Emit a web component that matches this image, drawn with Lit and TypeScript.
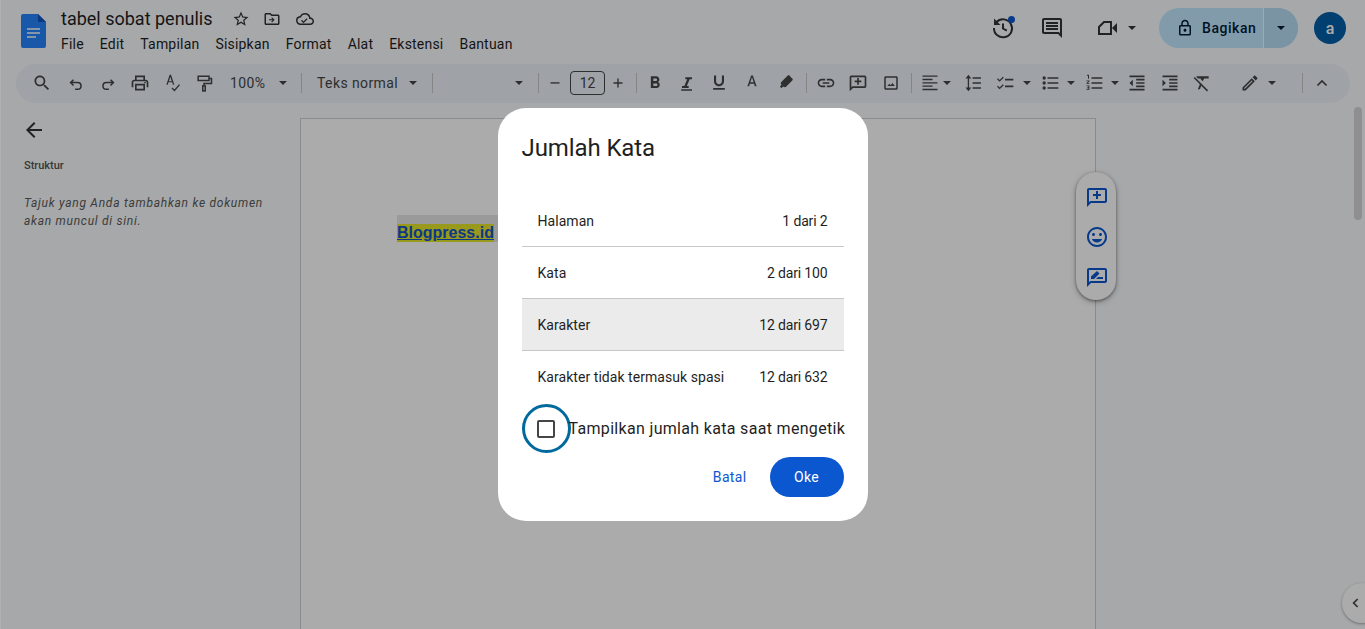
import { LitElement, html, css, svg } from "lit";
import { customElement } from "lit/decorators.js";

const stroke = (c: unknown, w = 2) => svg`<g fill="none" stroke="currentColor" stroke-width="${w}">${c}</g>`;
const icons: Record<string, unknown> = {
  search: svg`<path d="M15.5 14h-.79l-.28-.27C15.41 12.59 16 11.11 16 9.5 16 5.91 13.09 3 9.5 3S3 5.91 3 9.5 5.91 16 9.5 16c1.61 0 3.09-.59 4.23-1.57l.27.28v.79l5 4.99L20.49 19l-4.99-5zm-6 0C7.01 14 5 11.99 5 9.5S7.01 5 9.5 5 14 7.01 14 9.5 11.99 14 9.5 14z"/>`,
  undo: stroke(svg`<path d="M9 15 5.5 11.5 9 8M5.5 11.5H14a4 4 0 0 1 0 8h-3"/>`, 1.8),
  redo: stroke(svg`<path d="M15 8l3.5 3.5L15 15M18.5 11.5H10a4 4 0 0 0 0 8h3"/>`, 1.8),
  print: svg`<path d="M19 8h-1V3H6v5H5c-1.66 0-3 1.34-3 3v6h4v4h12v-4h4v-6c0-1.66-1.34-3-3-3zM8 5h8v3H8V5zm8 14H8v-4h8v4zm2-2v-4H6v4H4v-6c0-.55.45-1 1-1h14c.55 0 1 .45 1 1v6h-2z"/><circle cx="18" cy="11.5" r="1"/>`,
  spell: svg`<path d="M5.2 14h1.6l1-2.8h4.4l1 2.8h1.6L10.8 2H9.2L5.2 14zm3.1-4.2L10 4.9l1.7 4.9H8.3z"/>${stroke(svg`<path d="M12 18l3 3 6-7"/>`, 1.6)}`,
  paint: stroke(svg`<path d="M5 4h13v5H5zM18 6.5h3v6h-9v3"/><rect x="10.5" y="15.5" width="3" height="6"/>`, 1.8),
  bold: svg`<path d="M15.6 10.79c.97-.67 1.65-1.77 1.65-2.79 0-2.26-1.75-4-4-4H7v14h7.04c2.09 0 3.71-1.7 3.71-3.79 0-1.52-.86-2.82-2.15-3.42zM10 6.5h3c.83 0 1.5.67 1.5 1.5s-.67 1.5-1.5 1.5h-3v-3zm3.5 9H10v-3h3.5c.83 0 1.5.67 1.5 1.5s-.67 1.5-1.5 1.5z"/>`,
  italic: svg`<path d="M9 4v2.5h2.21l-3.42 8H5V17h8v-2.5h-2.21l3.42-8H17V4z" transform="translate(1 1)"/><rect x="5" y="19.5" width="13" height="1.8"/>`,
  underline: svg`<path d="M12 16c3.31 0 6-2.69 6-6V3h-2.5v7c0 1.93-1.57 3.5-3.5 3.5S8.5 11.93 8.5 10V3H6v7c0 3.31 2.69 6 6 6zM5 18v2h14v-2H5z"/>`,
  textcolor: svg`<path d="M11 3 6.5 16h2l1-3h5l1 3h2L13 3h-2zm-1 8 2-6 2 6h-4z"/>`,
  marker: svg`<path d="M18.5 3.5 21 6c.5.5.5 1.2 0 1.7l-8 8-1.5.5-1-1-3 1.8-1.5-1.5 1.8-3-1-1 .5-1.5 8-8c.5-.5 1.7-.5 2.2 0z" transform="translate(0 1)"/>`,
  link: svg`<path d="M3.9 12c0-1.71 1.39-3.1 3.1-3.1h4V7H7c-2.76 0-5 2.24-5 5s2.24 5 5 5h4v-1.9H7c-1.71 0-3.1-1.39-3.1-3.1zM8 13h8v-2H8v2zm9-6h-4v1.9h4c1.71 0 3.1 1.39 3.1 3.1s-1.39 3.1-3.1 3.1h-4V17h4c2.76 0 5-2.24 5-5s-2.24-5-5-5z"/>`,
  addc: svg`<path d="M20 3H4c-1.1 0-2 .9-2 2v17l4-4h14c1.1 0 2-.9 2-2V5c0-1.1-.9-2-2-2zm0 13H5.2L4 17.2V5h16v11zM11 14h2v-3h3V9h-3V6h-2v3H8v2h3z"/>`,
  image: svg`<path d="M19 5v14H5V5h14m0-2H5c-1.1 0-2 .9-2 2v14c0 1.1.9 2 2 2h14c1.1 0 2-.9 2-2V5c0-1.1-.9-2-2-2zM7 16h10l-3-4-2.5 3-1.5-2z"/>`,
  align: svg`<path d="M3 4h18v1.6H3zM3 8h12v1.6H3zM3 12h18v1.6H3zM3 16h12v1.6H3zM3 20h18v1.6H3z" transform="translate(0 -1)"/>`,
  spacing: svg`${stroke(svg`<path d="M6.5 5v14"/>`, 1.6)}<path d="M6.5 2 10 6.500H3zM6.500 22 3 17.500h7zM11.500 5h10v2h-10zM11.500 11h10v2h-10zM11.500 17h10v2h-10z"/>`,
  check: svg`${stroke(svg`<path d="M3 7l2.5 2.5L10 5M3 16l2.5 2.5L10 14"/>`, 1.6)}<path d="M12 7h10v2H12zM12 15h10v2H12z"/>`,
  bullet: svg`<circle cx="5" cy="6" r="2"/><circle cx="5" cy="12" r="2"/><circle cx="5" cy="18" r="2"/><path d="M9 5h13v2H9zM9 11h13v2H9zM9 17h13v2H9z"/>`,
  number: svg`<path d="M9 5h13v2H9zM9 11h13v2H9zM9 17h13v2H9zM3.5 2H6v5H4.8V3.2H3.5zM3 9h3.5v1.2L4.5 12h2v1H3v-1l2-1.800V10H3zM3 15h3.500v5H3v-1h2.300v-1H4v-1h1.300v-1H3z"/>`,
  outdent: svg`<path d="M3 3h18v2H3zM11 7h10v2H11zM11 11h10v2H11zM11 15h10v2H11zM3 19h18v2H3zM7 8v8l-4-4z"/>`,
  indent: svg`<path d="M3 3h18v2H3zM11 7h10v2H11zM11 11h10v2H11zM11 15h10v2H11zM3 19h18v2H3zM3 8v8l4-4z"/>`,
  clear: svg`<path d="M5 4h15v2.500h-5.500L13 10l-2-2-.800-1.500H7zM3.300 4.700 2 6l7.400 7.400L7 19.500h2.500l1.600-4.300 6.900 6.900 1.300-1.300z"/>`,
  pencil: svg`<path d="M3 17.250V21h3.750L17.810 9.940l-3.750-3.750L3 17.250zM5.920 19H5v-.92l9.060-9.060.92.92L5.920 19zM20.710 7.040a.996.996 0 0 0 0-1.410l-2.340-2.340a.996.996 0 0 0-1.410 0l-1.830 1.830 3.750 3.750 1.830-1.830z"/>`,
  chevup: stroke(svg`<path d="M6.500 15 12 9.500 17.500 15"/>`, 2),
  minus: svg`<rect x="6" y="11" width="12" height="1.800"/>`,
  plus: svg`<path d="M11.100 6h1.800v5.100H18v1.800h-5.100V18h-1.800v-5.100H6v-1.800h5.100z"/>`,
  star: svg`<path d="M22 9.240l-7.190-.62L12 2 9.190 8.630 2 9.240l5.460 4.730L5.820 21 12 17.270 18.180 21l-1.630-7.030L22 9.240zM12 15.400l-3.760 2.270 1-4.280-3.320-2.880 4.380-.38L12 6.100l1.710 4.040 4.380.38-3.320 2.880 1 4.280L12 15.400z"/>`,
  move: svg`<path d="M20 6h-8l-2-2H4c-1.100 0-2 .9-2 2v12c0 1.100.9 2 2 2h16c1.100 0 2-.9 2-2V8c0-1.100-.9-2-2-2zm0 12H4V6h5.200l2 2H20v10zM12 9.500 11 10.500l1.800 1.800H8v1.500h4.800L11 15.500l1 1 3.500-3.500z"/>`,
  cloud: svg`<path d="M19.350 10.040A7.490 7.490 0 0 0 12 4C9.110 4 6.600 5.640 5.350 8.040A5.994 5.994 0 0 0 0 14c0 3.310 2.690 6 6 6h13c2.760 0 5-2.240 5-5 0-2.640-2.050-4.780-4.650-4.960zM19 18H6c-2.210 0-4-1.790-4-4s1.790-4 4-4h.71C7.370 7.690 9.480 6 12 6a5.500 5.500 0 0 1 5.500 5.500v.5H19c1.660 0 3 1.340 3 3s-1.340 3-3 3zM10 15.200l-2.100-2.100-1.200 1.200L10 17.600l5.300-5.300-1.200-1.200z"/>`,
  history: svg`${stroke(svg`<path d="M5.400 6.200A9 9 0 1 1 3 12"/><path d="M12 7.500V12.500l3.800 2.200"/>`, 2)}<path d="M3 2.500v6.500h6.500z"/>`,
  comment: svg`<path d="M20 17.170 18.830 16H4V4h16v13.170zM20 2H4c-1.100 0-2 .9-2 2v12c0 1.100.9 2 2 2h14l4 4V4c0-1.100-.9-2-2-2zM6 12h12v2H6zM6 9h12v2H6zM6 6h12v2H6z"/>`,
  video: svg`${stroke(svg`<path d="M8 6h7v12H3v-7z"/>`, 2)}<path d="M16 12l5-5v10z"/>`,
  lock: svg`<path d="M18 8h-1V6c0-2.760-2.240-5-5-5S7 3.240 7 6v2H6c-1.100 0-2 .9-2 2v10c0 1.100.9 2 2 2h12c1.100 0 2-.9 2-2V10c0-1.100-.9-2-2-2zM9 6c0-1.660 1.340-3 3-3s3 1.340 3 3v2H9V6zm9 14H6V10h12v10zm-6-3c1.100 0 2-.9 2-2s-.9-2-2-2-2 .9-2 2 .9 2 2 2z"/>`,
  back: svg`<path d="M20 11H7.830l5.590-5.590L12 4l-8 8 8 8 1.410-1.410L7.830 13H20z"/>`,
  emoji: svg`<path d="M11.990 2C6.470 2 2 6.480 2 12s4.470 10 9.990 10C17.520 22 22 17.520 22 12S17.520 2 11.990 2zM12 20c-4.420 0-8-3.580-8-8s3.580-8 8-8 8 3.580 8 8-3.580 8-8 8zm3.500-9c.83 0 1.500-.67 1.500-1.500S16.330 8 15.500 8 14 8.670 14 9.500s.67 1.500 1.500 1.500zm-7 0c.83 0 1.500-.67 1.500-1.500S9.330 8 8.500 8 7 8.670 7 9.500 7.670 11 8.500 11zm3.500 6.500c2.330 0 4.310-1.460 5.110-3.500H6.890c.8 2.040 2.780 3.500 5.110 3.500z"/>`,
  suggest: svg`<path d="M20 3H4c-1.100 0-2 .9-2 2v17l4-4h14c1.100 0 2-.9 2-2V5c0-1.100-.9-2-2-2zm0 13H5.200L4 17.200V5h16v11zM6 14v-2.500L12 6l2.500 2.500L9 14zM11 14h7v-2h-5z"/>`,
  chevleft: stroke(svg`<path d="M14.500 6 8.500 12l6 6"/>`, 2.6),
};
const ic = (n: string, s = 20) => html`<svg class="ic" width=${s} height=${s} viewBox="0 0 24 24" fill="currentColor">${icons[n]}</svg>`;
const caret = html`<svg class="caret" width="8" height="4" viewBox="0 0 8 4"><path d="M0 0h8L4 4z" fill="currentColor"/></svg>`;

type T = { k: string; w: number; n?: string; t?: string; s?: number; pad?: number; ml?: number };
const toolbar: T[] = [
  { k: "b", w: 32, n: "search" }, { k: "g", w: 2 },
  { k: "b", w: 32, n: "undo" }, { k: "b", w: 32, n: "redo" }, { k: "b", w: 32, n: "print" }, { k: "b", w: 32, n: "spell" }, { k: "b", w: 32, n: "paint" },
  { k: "t", w: 72, t: "100%", pad: 10 }, { k: "s", w: 18 },
  { k: "t", w: 112, t: "Teks normal", pad: 7 }, { k: "s", w: 20 },
  { k: "t", w: 86, t: "", pad: 0 }, { k: "s", w: 20 },
  { k: "b", w: 14, n: "minus", s: 18 }, { k: "g", w: 8 }, { k: "box", w: 35, t: "12" },
  { k: "b", w: 26, n: "plus", s: 18 }, { k: "s", w: 10 },
  { k: "b", w: 28, n: "bold" }, { k: "g", w: 2 }, { k: "b", w: 32, n: "italic" }, { k: "b", w: 32, n: "underline" },
  { k: "b", w: 34, n: "textcolor" }, { k: "b", w: 32, n: "marker" }, { k: "s", w: 11 },
  { k: "b", w: 28, n: "link" }, { k: "g", w: 2 }, { k: "b", w: 32, n: "addc" }, { k: "g", w: 1 }, { k: "b", w: 32, n: "image", s: 18 }, { k: "s", w: 8 },
  { k: "c", w: 42, n: "align", pad: 5, ml: 3 }, { k: "b", w: 32, n: "spacing" },
  { k: "c", w: 45, n: "check", pad: 6, ml: 8 }, { k: "c", w: 44, n: "bullet", pad: 6, ml: 7 }, { k: "c", w: 44, n: "number", pad: 6, ml: 7 },
  { k: "b", w: 30, n: "outdent" }, { k: "b", w: 36, n: "indent" }, { k: "b", w: 28, n: "clear" }, { k: "g", w: 24 },
  { k: "c", w: 36, n: "pencil", pad: 0, ml: 8 }, { k: "g", w: 16 }, { k: "s", w: 20 }, { k: "b", w: 20, n: "chevup" },
];

@customElement("app-root")
export class AppRoot extends LitElement {
  static styles = css`
    :host { display: block; position: relative; height: 100vh; min-height: 629px; overflow: hidden; background: #f9fbfd; color: #1f1f1f; font-family: Roboto, "Liberation Sans", sans-serif; }
    * { box-sizing: border-box; }
    .ic { display: block; flex: none; }
    .caret { display: block; flex: none; }
    header { display: flex; height: 64px; align-items: flex-start; }
    .logo { margin: 14px 0 0 21px; flex: none; }
    .names { margin-left: 15px; padding-top: 7px; }
    .titleline { display: flex; align-items: center; height: 23px; }
    .title { font-size: 18px; letter-spacing: 0; line-height: 23px; width: 171px; white-space: nowrap; }
    .star { color: #333; }
    .folder { margin-left: 13px; color: #333; }
    .cloud { margin-left: 15px; color: #333; }
    nav { display: flex; margin-top: 4px; font-size: 14px; letter-spacing: .2px; line-height: 20px; gap: 16px; color: #1f1f1f; }
    .right { margin-left: auto; display: flex; align-items: center; height: 56px; color: #333; padding-right: 19px; }
    .comment-i { margin-left: 25px; }
    .hist { position: relative; }
    .dot { position: absolute; top: 0; right: 0; width: 7px; height: 7px; border-radius: 50%; background: #0b57d0; }
    .video { margin-left: 32px; }
    .vc { margin-left: 8px; }
    .share { margin-left: 23px; display: flex; width: 139px; height: 40px; border-radius: 20px; overflow: hidden; background: #c2e7ff; color: #001d35; }
    .sl { width: 105px; display: flex; align-items: center; padding-left: 17px; gap: 8px; font-size: 14px; font-weight: 500; letter-spacing: .55px; border-right: 1px solid #f9fbfd; }
    .sr { flex: 1; display: flex; align-items: center; justify-content: center; background: #b8ddf5; }
    .avatar { margin-left: 16px; width: 32px; height: 32px; border-radius: 50%; background: #005fa8; color: #fff; font-size: 16px; font-weight: 500; display: flex; align-items: center; justify-content: center; }
    .tb { margin: 0 15px 0 16px; height: 39px; border-radius: 20px; background: #edf2fa; display: flex; align-items: center; padding: 0 0 1px 10px; color: #444746; }
    .tb > * { flex: none; height: 28px; display: flex; align-items: center; justify-content: center; }
    .tt { justify-content: space-between !important; font-size: 14px; letter-spacing: .4px; padding-right: 5px; }
    .sep::before { content: ""; width: 1px; height: 20px; background: #c7c7c7; }
    .box { border: 1px solid #444746; border-radius: 4px; height: 24px !important; font-size: 14px; }
    .combo { justify-content: flex-start !important; }
    main { display: flex; height: 526px; }
    aside { flex: none; width: 300px; padding-left: 24px; }
    .backi { display: block; margin: 15px 0 0 -2px; color: #333; }
    .st { margin-top: 17px; font-size: 11px; font-weight: 500; line-height: 14px; color: #555; }
    .hint { margin: 21px 0 0; font-size: 12px; font-style: italic; line-height: 18px; letter-spacing: .73px; color: #5a5a5a; width: 250px; }
    .page { flex: none; width: 796px; margin-top: 15px; background: #fff; border: 1px solid #d0d0d0; border-bottom: none; padding: 96px 0 0 96px; }
    .sel { background: #e6e6e6; padding-top: 9px; width: 101px; height: 27px; }
    .doc { display: block; width: 97px; background: #e4e42a; height: 18px; font: bold 16px/18px "Liberation Sans", sans-serif; color: #1155cc; text-decoration: underline; white-space: nowrap; }
    .side { position: absolute; left: 1076px; top: 172px; width: 40px; height: 128px; border-radius: 20px; background: #fff; box-shadow: 0 1px 3px rgba(0,0,0,.4), 0 2px 6px rgba(0,0,0,.25); display: flex; flex-direction: column; align-items: center; justify-content: center; gap: 16px; padding: 2px 0 0 1px; color: #0b57d0; }
    .thumb { position: absolute; left: 1354px; top: 107px; width: 8px; height: 113px; border-radius: 4px; background: #d5d6d8; }
    .edge { position: absolute; left: 1342px; top: 583px; width: 40px; height: 40px; border-radius: 50%; background: #fff; box-shadow: 0 1px 3px rgba(0,0,0,.35); display: flex; align-items: center; padding-left: 6px; color: #444746; }
    .overlay { position: absolute; inset: 0; background: rgba(0,0,0,.33); display: flex; align-items: center; justify-content: center; }
    .strip { position: absolute; left: 0; top: 0; bottom: 0; width: 1px; background: rgba(255,255,255,.12); }
    .dialog { width: 370px; height: 413px; border-radius: 28px; background: #fff; padding: 24px; display: flex; flex-direction: column; }
    h2 { margin: 0; font: 400 24px/32px Roboto, sans-serif; letter-spacing: -.1px; color: #1f1f1f; height: 62px; }
    .rows { display: flex; flex-direction: column; margin-top: 1px; }
    .row { height: 52px; display: flex; align-items: center; justify-content: space-between; padding: 0 16px; font-size: 14px; letter-spacing: .05px; border-bottom: 1px solid #c7c7c7; color: #1f1f1f; }
    .row span + span { letter-spacing: -.15px; }
    .row:last-child { border-bottom: none; }
    .row.on { background: #ebebeb; }
    .cb { display: flex; align-items: center; height: 49px; margin-top: 1px; }
    .ring { flex: none; width: 49px; height: 49px; border-radius: 50%; border: 3px solid #006a9e; display: flex; align-items: center; justify-content: center; padding-top: 1px; }
    .square { width: 18px; height: 18px; border: 2px solid #444746; border-radius: 2px; }
    .cb span { margin-left: -2px; font-size: 16px; letter-spacing: .32px; white-space: nowrap; color: #1f1f1f; }
    .acts { display: flex; justify-content: flex-end; align-items: center; margin-top: 4px; gap: 23px; font-size: 14px; letter-spacing: .35px; }
    .batal { color: #0b57d0; }
    .oke { width: 74px; height: 40px; border-radius: 20px; background: #0b57d0; color: #fff; display: flex; align-items: center; justify-content: center; }
  `;

  private item(t: T) {
    const w = `width:${t.w}px`;
    if (t.k === "b") return html`<div style=${w}>${ic(t.n!, t.s ?? 20)}</div>`;
    if (t.k === "g") return html`<div style=${w}></div>`;
    if (t.k === "s") return html`<div class="sep" style=${w}></div>`;
    if (t.k === "box") return html`<div class="box" style=${w}>${t.t}</div>`;
    if (t.k === "t") return html`<div class="tt" style="${w};padding-left:${t.pad}px"><span>${t.t}</span>${caret}</div>`;
    return html`<div class="combo" style="${w};padding-left:${t.pad}px">${ic(t.n!)}<span style="margin-left:${t.ml}px;display:flex">${caret}</span></div>`;
  }

  render() {
    return html`
      <header>
        <svg class="logo" width="25" height="34" viewBox="0 0 25 34">
          <path d="M2 0h15l8 8v24a2 2 0 0 1-2 2H2a2 2 0 0 1-2-2V2a2 2 0 0 1 2-2z" fill="#2684fc"/>
          <path d="M17 0l8 8h-8z" fill="#0f55c0"/>
          <path d="M6 14h13v2H6zM6 18h13v2H6zM6 22h9v2H6z" fill="#fff" opacity=".75"/>
        </svg>
        <div class="names">
          <div class="titleline">
            <div class="title">tabel sobat penulis</div>
            <div class="star">${ic("star", 18)}</div>
            <div class="folder">${ic("move", 18)}</div>
            <div class="cloud">${ic("cloud", 18)}</div>
          </div>
          <nav>${["File", "Edit", "Tampilan", "Sisipkan", "Format", "Alat", "Ekstensi", "Bantuan"].map((m) => html`<span>${m}</span>`)}</nav>
        </div>
        <div class="right">
          <div class="hist">${ic("history", 24)}<i class="dot"></i></div>
          <div class="comment-i">${ic("comment", 24)}</div>
          <div class="video">${ic("video", 24)}</div>
          <div class="vc">${caret}</div>
          <div class="share">
            <div class="sl">${ic("lock", 18)}Bagikan</div>
            <div class="sr">${caret}</div>
          </div>
          <div class="avatar">a</div>
        </div>
      </header>
      <div class="tb">${toolbar.map((t) => this.item(t))}</div>
      <main>
        <aside>
          <div class="backi">${ic("back", 24)}</div>
          <div class="st">Struktur</div>
          <p class="hint">Tajuk yang Anda tambahkan ke dokumen akan muncul di sini.</p>
        </aside>
        <div class="page"><div class="sel"><span class="doc">Blogpress.id</span></div></div>
      </main>
      <div class="side">${ic("addc", 24)}${ic("emoji", 24)}${ic("suggest", 24)}</div>
      <div class="thumb"></div>
      <div class="edge">${ic("chevleft", 16)}</div>
      <div class="overlay">
        <div class="strip"></div>
        <div class="dialog">
          <h2>Jumlah Kata</h2>
          <div class="rows">
            <div class="row"><span>Halaman</span><span>1 dari 2</span></div>
            <div class="row"><span>Kata</span><span>2 dari 100</span></div>
            <div class="row on"><span>Karakter</span><span>12 dari 697</span></div>
            <div class="row"><span>Karakter tidak termasuk spasi</span><span>12 dari 632</span></div>
          </div>
          <div class="cb"><div class="ring"><div class="square"></div></div><span>Tampilkan jumlah kata saat mengetik</span></div>
          <div class="acts"><span class="batal">Batal</span><div class="oke">Oke</div></div>
        </div>
      </div>
    `;
  }
}
